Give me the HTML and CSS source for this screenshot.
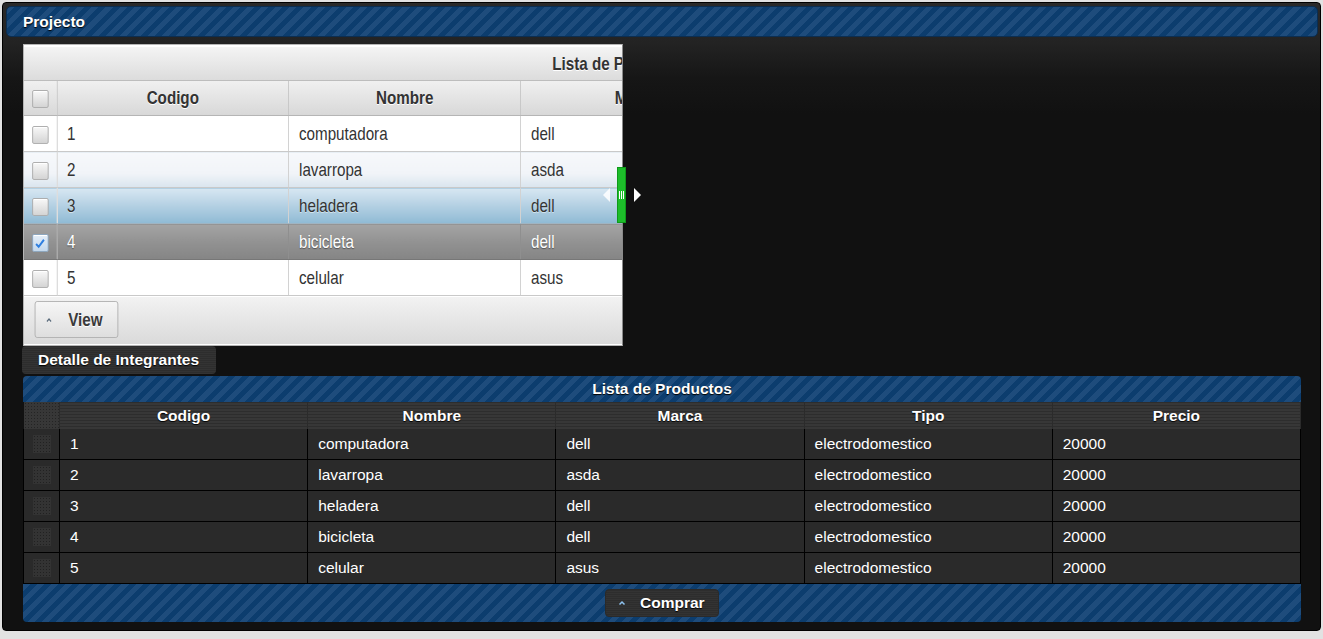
FILE: index.html
```html
<!DOCTYPE html>
<html>
<head>
<meta charset="utf-8">
<link rel="stylesheet" href="styles.css">
</head>
<body>
<div class="panel">
  <div class="panel-header stripes">Projecto</div>
  <div class="panel-body">
    <div class="split">
      <div class="view">
        <div class="ldt">
          <div class="ldt-title">Lista de Productos</div>
          <table class="ltab">
            <colgroup><col class="c-chk"><col><col><col><col><col></colgroup>
            <thead>
              <tr><th><span class="lchk"></span></th><th>Codigo</th><th>Nombre</th><th>Marca</th><th>Tipo</th><th>Precio</th></tr>
            </thead>
            <tbody>
              <tr class="r-even"><td><span class="lchk"></span></td><td>1</td><td>computadora</td><td>dell</td><td>electrodomestico</td><td>20000</td></tr>
              <tr class="r-odd"><td><span class="lchk"></span></td><td>2</td><td>lavarropa</td><td>asda</td><td>electrodomestico</td><td>20000</td></tr>
              <tr class="r-hover"><td><span class="lchk"></span></td><td>3</td><td>heladera</td><td>dell</td><td>electrodomestico</td><td>20000</td></tr>
              <tr class="r-sel"><td><span class="lchk on"><svg viewBox="0 0 16 16" width="17" height="15" preserveAspectRatio="none"><polyline points="3.5,8.5 6.5,11.5 12.5,4" fill="none" stroke="#2f7fe0" stroke-width="2.2"/></svg></span></td><td>4</td><td>bicicleta</td><td>dell</td><td>electrodomestico</td><td>20000</td></tr>
              <tr class="r-even"><td><span class="lchk"></span></td><td>5</td><td>celular</td><td>asus</td><td>electrodomestico</td><td>20000</td></tr>
            </tbody>
          </table>
          <div class="ldt-foot">
            <button class="lbtn"><svg class="caret" viewBox="0 0 8 6" width="9" height="6"><polyline points="1.5,4.5 4,2 6.5,4.5" fill="none" stroke="#5a6b7c" stroke-width="1.5"/></svg>View</button>
          </div>
        </div>
      </div>
      <div class="handle">
        <span class="tri-l"></span>
        <span class="grip"><i></i><i></i><i></i></span>
        <span class="tri-r"></span>
      </div>
    </div>

    <div class="tab">Detalle de Integrantes</div>

    <div class="ddt">
      <div class="ddt-title stripes">Lista de Productos</div>
      <table class="dtab">
        <colgroup><col class="d-chk"><col><col><col><col><col></colgroup>
        <thead>
          <tr><th class="th-chk"></th><th>Codigo</th><th>Nombre</th><th>Marca</th><th>Tipo</th><th>Precio</th></tr>
        </thead>
        <tbody>
          <tr><td><span class="dchk"></span></td><td>1</td><td>computadora</td><td>dell</td><td>electrodomestico</td><td>20000</td></tr>
          <tr><td><span class="dchk"></span></td><td>2</td><td>lavarropa</td><td>asda</td><td>electrodomestico</td><td>20000</td></tr>
          <tr><td><span class="dchk"></span></td><td>3</td><td>heladera</td><td>dell</td><td>electrodomestico</td><td>20000</td></tr>
          <tr><td><span class="dchk"></span></td><td>4</td><td>bicicleta</td><td>dell</td><td>electrodomestico</td><td>20000</td></tr>
          <tr><td><span class="dchk"></span></td><td>5</td><td>celular</td><td>asus</td><td>electrodomestico</td><td>20000</td></tr>
        </tbody>
      </table>
      <div class="ddt-foot stripes">
        <button class="dbtn"><svg class="caret" viewBox="0 0 8 6" width="8" height="6"><polyline points="1.5,4.5 4,2 6.5,4.5" fill="none" stroke="#8fc3f0" stroke-width="1.5"/></svg>Comprar</button>
      </div>
    </div>
  </div>
</div>
</body>
</html>
```

FILE: styles.css
```css
html, body {
  margin: 0;
  padding: 0;
  background: #e2e2e2;
  font-family: "Liberation Sans", Arial, sans-serif;
}

.panel {
  margin: 2px;
  border: 1px solid #000;
  border-radius: 4px;
  background: linear-gradient(to bottom, #2a2a2a 0, #232323 40px, #161616 75px, #111 110px, #111 100%);
  height: 629px;
  box-sizing: border-box;
  overflow: hidden;
}

.stripes {
  background: repeating-linear-gradient(135deg, #1e4c7c 0 5px, #0c3d6e 5px 10px);
}

.panel-header {
  margin: 3px 2px 0 3px;
  height: 31px;
  box-sizing: border-box;
  border: 1px solid #0b2e52;
  border-radius: 5px;
  color: #fff;
  font-weight: bold;
  font-size: 15.5px;
  line-height: 29px;
  padding-left: 16px;
  text-shadow: 0 1px 1px #000;
}

.panel-body {
  padding: 7px 19px 0 20px;
}

/* ---------- light resizable datatable ---------- */
.split {
  position: relative;
  width: 600px;
}

.view {
  width: 600px;
  height: 302px;
  box-sizing: border-box;
  border: 1px solid #b5b5b5;
  border-right-color: #8a8a8a;
  padding-top: 1px;
  background: #fff;
  overflow: hidden;
}

/* narrow face rendered by horizontal compression of the table */
.ldt {
  width: 1455px;
  transform: scaleX(0.82);
  transform-origin: 0 0;
  font-family: "Liberation Sans", Arial, sans-serif;
  font-size: 18.5px;
  color: #333;
}

.ldt-title {
  height: 35px;
  box-sizing: border-box;
  border-top: 1px solid #fff;
  border-bottom: 1px solid #bdbdbd;
  background: linear-gradient(to bottom, #f4f4f4, #dcdcdc);
  text-align: center;
  font-weight: bold;
  line-height: 34px;
  text-shadow: 0 1px 0 #fff;
}

.ltab {
  width: 1455px;
  table-layout: fixed;
  border-collapse: collapse;
}

.ltab .c-chk { width: 40px; }

.ltab th {
  height: 34px;
  padding: 0;
  background: linear-gradient(to bottom, #f0f0f0, #d8d8d8);
  border-right: 1px solid #c2c2c2;
  border-bottom: 1px solid #b5b5b5;
  font-weight: bold;
  text-align: center;
  text-shadow: 0 1px 0 #fff;
}

.ltab td {
  height: 35px;
  padding: 0 0 0 12px;
  border-right: 1px solid #c8c8c8;
  border-bottom: 1px solid #c9c9c9;
  white-space: nowrap;
  overflow: hidden;
}

.ltab td:first-child,
.ltab th:first-child {
  padding: 0;
  text-align: center;
}

.r-even td { background: #fff; }

.r-odd td {
  background: linear-gradient(to bottom, #f6f8fb 0, #f1f4f8 60%, #d9e5ee 100%);
}

.r-hover td {
  background: linear-gradient(to bottom, #d7e7f2 0, #b7d2e4 45%, #8fbad4 100%);
  border-bottom-color: #9fb4c2;
  text-shadow: 0 1px 0 rgba(255,255,255,.5);
}

.r-sel td {
  background: linear-gradient(to bottom, #a4a4a4 0, #929292 50%, #858585 100%);
  color: #fff;
  text-shadow: 0 1px 1px #555;
  border-top: 1px solid #6f6f6f;
  border-bottom-color: #777;
  border-right-color: #777;
}

.lchk {
  display: inline-block;
  width: 18px;
  height: 16px;
  vertical-align: middle;
  border: 1px solid #a9a9a9;
  border-radius: 2px;
  background: linear-gradient(to bottom, #f8f8f8, #d4d4d4);
  box-shadow: inset 0 1px 0 #fff;
  position: relative;
}

.lchk.on {
  background: linear-gradient(to bottom, #e4eef8, #c4d8ec);
  border-color: #8aa4be;
}

.lchk svg {
  position: absolute;
  left: 0;
  top: 1px;
}

.ldt-foot {
  height: 48px;
  box-sizing: border-box;
  padding: 4px 0 0 13px;
  background: linear-gradient(to bottom, #f2f2f2, #dadada);
  border-top: 1px solid #fff;
}

.lbtn {
  height: 37px;
  width: 102px;
  box-sizing: border-box;
  border: 1px solid #b0b0b0;
  border-radius: 3px;
  background: linear-gradient(to bottom, #f6f6f6, #dedede);
  font-family: "Liberation Sans", Arial, sans-serif;
  font-size: 18.5px;
  font-weight: bold;
  color: #3a3a3a;
  text-shadow: 0 1px 0 #fff;
  display: flex;
  align-items: center;
  padding: 0 0 0 12px;
  gap: 19px;
}

/* resize handle overlay */
.handle {
  position: absolute;
  left: 580px;
  top: 123px;
  height: 56px;
  display: flex;
  align-items: center;
}

.grip {
  width: 9px;
  height: 56px;
  box-sizing: border-box;
  background: #1dbd2a;
  border: 1px solid #0e9a1a;
  display: flex;
  align-items: center;
  justify-content: center;
  gap: 1px;
}

.grip i {
  display: block;
  width: 1px;
  height: 8px;
  background: #fff;
}

.tri-l {
  width: 0;
  height: 0;
  border-top: 7px solid transparent;
  border-bottom: 7px solid transparent;
  border-right: 7px solid rgba(255,255,255,.85);
  margin-right: 7px;
}

.tri-r {
  width: 0;
  height: 0;
  border-top: 7px solid transparent;
  border-bottom: 7px solid transparent;
  border-left: 7px solid #fff;
  margin-left: 8px;
}

/* ---------- tab ---------- */
.tab {
  display: inline-block;
  margin-left: -1px;
  height: 28px;
  width: 194px;
  box-sizing: border-box;
  background: #333;
  background-image: linear-gradient(rgba(0,0,0,.12) 1px, transparent 1px);
  background-size: 2px 2px;
  border-radius: 4px;
  color: #fff;
  font-weight: bold;
  font-size: 15.5px;
  line-height: 28px;
  padding-left: 16px;
  text-shadow: 0 1px 1px #000;
  vertical-align: top;
}

/* ---------- dark datatable ---------- */
.ddt {
  margin-top: 2px;
  width: 1278px;
  color: #fff;
}

.ddt-title {
  height: 26px;
  border-radius: 4px 4px 0 0;
  text-align: center;
  font-weight: bold;
  font-size: 15.5px;
  line-height: 26px;
  text-shadow: 0 1px 1px #000;
}

.dtab {
  width: 1278px;
  table-layout: fixed;
  border-collapse: collapse;
  font-size: 15.5px;
}

.dtab .d-chk { width: 36px; }

.dtab th {
  height: 27px;
  padding: 0;
  background-color: #373737;
  background-image: linear-gradient(rgba(0,0,0,.18) 1px, transparent 1px);
  background-size: 3px 3px;
  border-right: 1px solid #2b2b2b;
  font-weight: bold;
  text-align: center;
  text-shadow: 0 1px 1px #000;
}

.dtab th.th-chk {
  background-image: radial-gradient(circle, rgba(0,0,0,.35) 0.7px, transparent 0.8px);
  background-size: 3px 3px;
}

.dtab td {
  height: 30px;
  padding: 0 0 0 10px;
  background: #2a2a2a;
  border-right: 1px solid #000;
  border-bottom: 1px solid #000;
  border-left: 1px solid #000;
  white-space: nowrap;
}

.dtab td:first-child {
  padding: 0;
  text-align: center;
}

.dchk {
  display: inline-block;
  width: 18px;
  height: 18px;
  vertical-align: middle;
  background-color: #333;
  background-image: radial-gradient(circle, rgba(0,0,0,.35) 0.7px, transparent 0.8px);
  background-size: 3px 3px;
}

.ddt-foot {
  height: 38px;
  border-radius: 0 0 4px 4px;
  display: flex;
  justify-content: center;
  align-items: center;
}

.dbtn {
  height: 28px;
  width: 114px;
  margin-top: -1px;
  box-sizing: border-box;
  border: 1px solid #2a2a2a;
  border-radius: 4px;
  background-color: #333;
  background-image: linear-gradient(rgba(0,0,0,.12) 1px, transparent 1px);
  background-size: 2px 2px;
  color: #fff;
  font-family: "Liberation Sans", Arial, sans-serif;
  font-size: 15.5px;
  font-weight: bold;
  text-shadow: 0 1px 1px #000;
  display: flex;
  align-items: center;
  padding: 0 0 0 12px;
  gap: 14px;
}
```
